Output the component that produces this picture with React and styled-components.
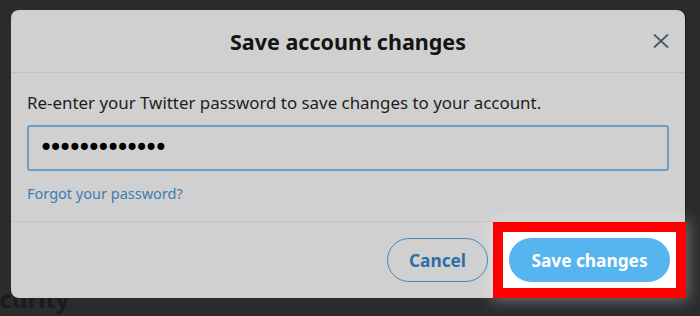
import React from 'react';
import styled, { createGlobalStyle } from 'styled-components';

const GlobalStyle = createGlobalStyle`
    body {
        margin: 0;
        background: #2b2b2b;
        font-family: "Noto Sans", "Open Sans", sans-serif;
    }
`;

const Page = styled.div`
    position: relative;
    width: 700px;
    height: 316px;
    overflow: hidden;
    background: #2b2b2b;
    display: flex;
    flex-direction: column;
    justify-content: flex-end;
`;

const BackHeading = styled.h2`
    margin: 0 0 3px -28px;
    font-size: 24px;
    line-height: 28px;
    font-weight: 700;
    color: #1b1b1b;
`;

const Dialog = styled.div`
    position: absolute;
    left: 11px;
    top: 10px;
    width: 674px;
    height: 288px;
    border-radius: 8px;
    background: #d0d0d0;
    box-shadow: 1px 0 0 #1a1a1a;
    display: flex;
    flex-direction: column;
`;

const Header = styled.div`
    display: grid;
    grid-template-columns: 48px 1fr 48px;
    align-items: center;
    height: 62px;
    border-bottom: 1px solid #c1c1c1;
`;

const Title = styled.h1`
    grid-column: 2;
    margin: 0;
    text-align: center;
    font-size: 21.5px;
    font-weight: 700;
    color: #141414;
`;

const CloseButton = styled.button`
    grid-column: 3;
    justify-self: center;
    border: 0;
    padding: 0;
    background: none;
    display: flex;
    cursor: pointer;
`;

const Body = styled.div`
    padding: 20px 16px 0;
    display: flex;
    flex-direction: column;
    height: 149px;
    box-sizing: border-box;
    border-bottom: 1px solid #c4c4c4;
`;

const Prompt = styled.p`
    margin: 0;
    font-size: 16.9px;
    line-height: 20px;
    color: #1e1e1e;
`;

const PasswordInput = styled.input`
    margin-top: 12px;
    height: 46px;
    box-sizing: border-box;
    border: 2px solid #6a9fc6;
    border-radius: 3px;
    background: #d0d0d0;
    padding: 0 10px;
    font-size: 24px;
    letter-spacing: -4.6px;
    color: #000;
    font-family: "DejaVu Sans", sans-serif;
    outline: none;
`;

const ForgotLink = styled.a`
    margin-top: 13px;
    align-self: flex-start;
    font-size: 14.5px;
    line-height: 18px;
    color: #3a7db4;
    text-decoration: none;
`;

const Footer = styled.div`
    flex: 1;
    display: flex;
    justify-content: flex-end;
    align-items: center;
    gap: 21px;
    padding: 0 15px;
`;

const PillButton = styled.button`
    height: 44px;
    width: ${props => props.width}px;
    border-radius: 22px;
    font-family: inherit;
    font-size: 17.3px;
    font-weight: 700;
    cursor: pointer;
    border: ${props => (props.primary ? '0' : '1.5px solid #4b87b8')};
    background: ${props => (props.primary ? '#56b4ee' : 'transparent')};
    color: ${props => (props.primary ? '#ffffff' : '#2d6fa7')};
    position: relative;
    z-index: 1;
`;

const Highlight = styled.div`
    position: relative;
    display: flex;

    &::before {
        content: '';
        position: absolute;
        inset: -16px;
        border: 10px solid #ff0000;
        background: #ffffff;
        box-shadow: 0 0 14px 2px rgba(255, 255, 255, 0.35);
    }
`;

const CloseIcon = () => (
    <svg width="16" height="16" viewBox="0 0 16 16">
        <path d="M1.5 2 L14.5 14 M14.5 2 L1.5 14" stroke="#4f5a63" strokeWidth="1.8" strokeLinecap="round" />
    </svg>
);

export default function App() {
    return (
        <>
            <GlobalStyle />
            <Page>
                <BackHeading>Security</BackHeading>
                <Dialog>
                    <Header>
                        <Title>Save account changes</Title>
                        <CloseButton aria-label="Close">
                            <CloseIcon />
                        </CloseButton>
                    </Header>
                    <Body>
                        <Prompt>Re-enter your Twitter password to save changes to your account.</Prompt>
                        <PasswordInput type="password" defaultValue="aaaaaaaaaaaaa" readOnly />
                        <ForgotLink href="#">Forgot your password?</ForgotLink>
                    </Body>
                    <Footer>
                        <PillButton width={101}>Cancel</PillButton>
                        <Highlight>
                            <PillButton primary width={161}>Save changes</PillButton>
                        </Highlight>
                    </Footer>
                </Dialog>
            </Page>
        </>
    );
}
